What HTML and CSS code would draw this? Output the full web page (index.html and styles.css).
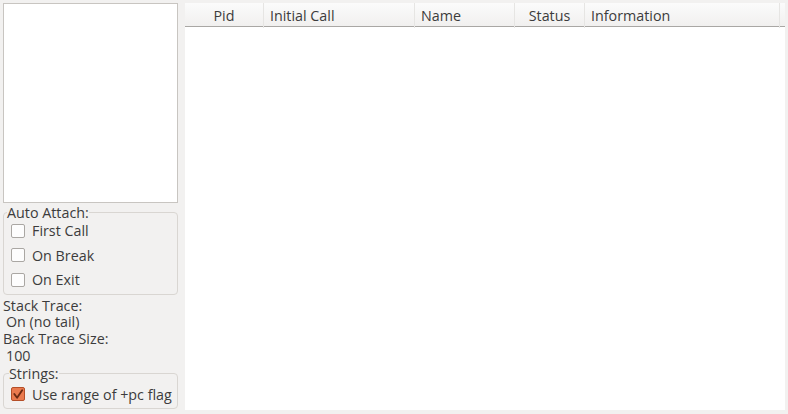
FILE: index.html
```html
<!DOCTYPE html>
<html>
<head>
<meta charset="utf-8">
<link rel="stylesheet" href="styles.css">
</head>
<body>
<div class="app">
  <div class="left">
    <div class="listbox"></div>
    <fieldset class="group auto">
      <legend>Auto Attach:</legend>
      <label class="check"><span class="box"></span>First Call</label>
      <label class="check"><span class="box"></span>On Break</label>
      <label class="check"><span class="box"></span>On Exit</label>
    </fieldset>
    <div class="info">
      <div class="key">Stack Trace:</div>
      <div class="val">On (no tail)</div>
      <div class="key">Back Trace Size:</div>
      <div class="val">100</div>
    </div>
    <fieldset class="group strings">
      <legend>Strings:</legend>
      <label class="check"><span class="box checked"><svg viewBox="0 0 13 13" width="13" height="13"><path d="M2.5 6 L5.5 10 L11 2" fill="none" stroke="#6b2a12" stroke-width="2" stroke-linecap="round" stroke-linejoin="round"/></svg></span>Use range of +pc flag</label>
    </fieldset>
  </div>
  <div class="table">
    <div class="header">
      <div class="col c1">Pid</div>
      <div class="col c2">Initial Call</div>
      <div class="col c3">Name</div>
      <div class="col c4">Status</div>
      <div class="col c5">Information</div>
      <div class="col c6"></div>
    </div>
    <div class="rows"></div>
  </div>
</div>
</body>
</html>
```
FILE: styles.css
```css
* { box-sizing: border-box; }
html, body { margin: 0; padding: 0; }
body {
  width: 788px;
  height: 414px;
  background: #f2f1f0;
  font-family: "Open Sans", "Noto Sans", sans-serif;
  font-size: 14.3px;
  color: #3c3c3c;
  overflow: hidden;
}
.app {
  display: flex;
  gap: 7px;
  padding: 3px 3px 4px 3px;
  height: 414px;
}
.left {
  width: 175px;
  display: flex;
  flex-direction: column;
}
.listbox {
  height: 200px;
  flex: none;
  background: #fff;
  border: 1px solid #c8c5c1;
}
.group {
  margin: 0;
  padding: 0;
  border: 1px solid #d9d6d2;
  border-radius: 4px;
  min-width: 0;
  flex: none;
}
.group legend {
  padding: 0;
  line-height: 17px;
  height: 17px;
}
.auto {
  margin-top: 0.5px;
  height: 91.5px;
  padding: 0 0 0 7px;
}
.auto legend { margin-left: -4px; }
.auto .check:first-of-type { margin-top: -2px; }
.check {
  display: flex;
  align-items: center;
  gap: 7px;
  height: 24.5px;
  line-height: 17px;
}
.box {
  width: 14px;
  height: 14px;
  border: 1px solid #aaa7a3;
  border-radius: 2px;
  background: #fdfdfd;
  flex: none;
  display: flex;
}
.box.checked {
  background: #ea7a4e;
  border-color: #b44f28;
}
.box svg { display: block; }
.info {
  padding-top: 2.5px;
  line-height: 16.75px;
  flex: none;
}
.val { padding-left: 3px; }
.strings {
  height: 44.5px;
  padding: 0 0 0 7px;
}
.strings legend { margin-left: -2px; }
.strings .check { height: 25px; }
.table {
  width: 600px;
  height: 407px;
  background: #fff;
  display: flex;
  flex-direction: column;
}
.header {
  display: grid;
  grid-template-columns: 79px 151px 100px 70px 195px 5px;
  height: 24px;
  background: linear-gradient(#fbfbfb, #f1f0ef);
  border-bottom: 1px solid #a9a7a4;
  line-height: 25px;
}
.col {
  border-right: 1px solid #e6e5e3;
  padding-left: 6px;
  white-space: nowrap;
}
.c1, .c4 { text-align: center; padding-left: 0; }
.c6 { border-right: none; }
.rows { flex: 1; }
```
